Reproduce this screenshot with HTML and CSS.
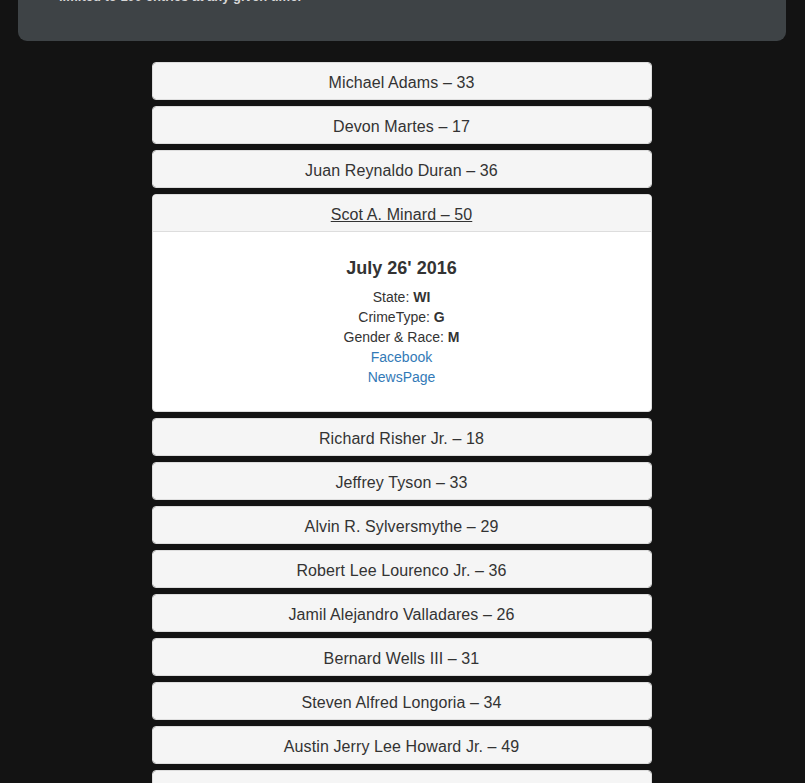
FILE: index.html
```html
<!DOCTYPE html>
<html lang="en">
<head>
<meta charset="utf-8">
<title>Entries</title>
<link rel="stylesheet" href="styles.css">
</head>
<body>
  <div class="intro">
    <p class="intro-text">limited to 100 entries at any given time.</p>
  </div>
  <div class="list">
    <div class="item"><div class="item-head">Michael Adams – 33</div></div>
    <div class="item"><div class="item-head">Devon Martes – 17</div></div>
    <div class="item"><div class="item-head">Juan Reynaldo Duran – 36</div></div>
    <div class="item open">
      <div class="item-head"><a class="item-link" href="#">Scot A. Minard – 50</a></div>
      <div class="item-body">
        <h3 class="date">July 26' 2016</h3>
        <div class="facts">
          <div>State: <b>WI</b></div>
          <div>CrimeType: <b>G</b></div>
          <div>Gender &amp; Race: <b>M</b></div>
          <div><a class="ext" href="#">Facebook</a></div>
          <div><a class="ext" href="#">NewsPage</a></div>
        </div>
      </div>
    </div>
    <div class="item"><div class="item-head">Richard Risher Jr. – 18</div></div>
    <div class="item"><div class="item-head">Jeffrey Tyson – 33</div></div>
    <div class="item"><div class="item-head">Alvin R. Sylversmythe – 29</div></div>
    <div class="item"><div class="item-head">Robert Lee Lourenco Jr. – 36</div></div>
    <div class="item"><div class="item-head">Jamil Alejandro Valladares – 26</div></div>
    <div class="item"><div class="item-head">Bernard Wells III – 31</div></div>
    <div class="item"><div class="item-head">Steven Alfred Longoria – 34</div></div>
    <div class="item"><div class="item-head">Austin Jerry Lee Howard Jr. – 49</div></div>
    <div class="item"><div class="item-head">Kevin Lee Smith – 40</div></div>
  </div>
</body>
</html>
```
FILE: styles.css
```css
html, body {
  margin: 0;
  padding: 0;
}
body {
  background: #131313;
  font-family: "Liberation Sans", Arial, sans-serif;
  color: #333;
  overflow: hidden;
  height: 783px;
}
.intro {
  margin: -50px 19px 0 18px;
  padding: 37px 40px 34px 41px;
  background: #3e4346;
  border-radius: 0 0 9px 9px;
}
.intro-text {
  margin: 0;
  font-size: 13px;
  line-height: 20px;
  font-weight: bold;
  color: #d6d6d6;
}
.list {
  width: 500px;
  margin: 21px auto 0;
  display: flex;
  flex-direction: column;
  gap: 6px;
  position: relative;
  left: -1px;
}
.item {
  background: #fff;
  border: 1px solid #ddd;
  border-radius: 4px;
  overflow: hidden;
}
.item-head {
  background: #f5f5f5;
  padding: 12px 15px 8px;
  font-size: 16px;
  line-height: 16px;
  text-align: center;
  color: #333;
  letter-spacing: 0.1px;
}
.item-link {
  color: #333;
  text-decoration: underline;
}
.item-body {
  border-top: 1px solid #ddd;
  padding: 15px;
  text-align: center;
}
.date {
  margin: 11px 0 9px;
  font-size: 18px;
  line-height: 20px;
  font-weight: bold;
  color: #333;
}
.facts {
  font-size: 14px;
  line-height: 20px;
  margin-bottom: 9px;
}
.facts b {
  font-weight: bold;
}
.ext {
  color: #337ab7;
  text-decoration: none;
}
```
